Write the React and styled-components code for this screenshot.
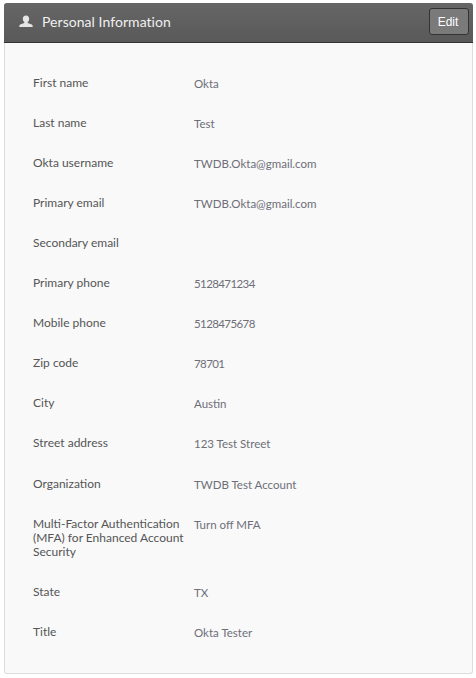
import React from 'react';
import styled, { createGlobalStyle } from 'styled-components';

const GlobalStyle = createGlobalStyle`
  html, body {
    margin: 0;
    padding: 0;
    background: #ffffff;
  }
  body {
    font-family: Lato, "Open Sans", sans-serif;
  }
`;

const Page = styled.div`
  width: 476px;
  height: 678px;
  padding: 3px 0 0 4px;
  box-sizing: border-box;
  overflow: hidden;
`;

const Card = styled.section`
  width: 469px;
  height: 671px;
  box-sizing: border-box;
  border: 1px solid #dcdcdc;
  border-top: 0;
  border-radius: 3px;
  background: #f9f9f9;
  display: flex;
  flex-direction: column;
`;

const Header = styled.header`
  height: 40px;
  margin: 0 -1px;
  box-sizing: border-box;
  padding: 0 4px 3px 15px;
  display: flex;
  align-items: center;
  background: linear-gradient(#666666, #595959);
  border-bottom: 1px solid #333333;
  border-radius: 3px 3px 0 0;
`;

const Heading = styled.h2`
  flex: 1;
  margin: 1px 0 0 9px;
  color: #f0f0f0;
  font-size: 14px;
  font-weight: 400;
  letter-spacing: 0.05px;
`;

const EditButton = styled.button`
  width: 40px;
  height: 27px;
  padding: 2px 2px 0 0;
  border: 1px solid #333333;
  border-radius: 3px;
  background: #7a7a7a;
  color: #ffffff;
  font-family: "Liberation Sans", Arial, sans-serif;
  font-size: 12px;
  font-weight: 400;
`;

const Fields = styled.dl`
  margin: 0;
  padding: 33.05px 28px 0 28px;
  display: flex;
  flex-direction: column;
  gap: 26.05px;
`;

const Row = styled.div`
  display: grid;
  grid-template-columns: 161px 1fr;
  line-height: 14px;
`;

const Label = styled.dt`
  padding-right: 4px;
  color: #555555;
  font-size: 12px;
`;

const Value = styled.dd`
  margin: 1px 0 -1px;
  color: #6e6e78;
  font-size: 11.5px;
  letter-spacing: ${(props) => (props.$digits ? '-0.6px' : '0')};
`;

const UserIcon = () => (
  <svg width="14" height="13" viewBox="0 0 14 14" aria-hidden="true" preserveAspectRatio="none">
    <path
      fill="#e6e6e6"
      d="M7 0.5c2 0 3.2 1.5 3.2 3.6 0 1.5-.6 2.8-1.5 3.5v1.100c1.600.6 4.300 1.200 4.800 2.400.2.5.2 1.200.2 1.900H.3c0-.7 0-1.400.2-1.900.5-1.200 3.200-1.800 4.800-2.400V7.600C4.400 6.900 3.800 5.600 3.800 4.100 3.800 2 5 .5 7 .5z"
    />
  </svg>
);

const fields = [
  ['First name', 'Okta'],
  ['Last name', 'Test'],
  ['Okta username', 'TWDB.Okta@gmail.com'],
  ['Primary email', 'TWDB.Okta@gmail.com'],
  ['Secondary email', ''],
  ['Primary phone', '5128471234'],
  ['Mobile phone', '5128475678'],
  ['Zip code', '78701'],
  ['City', 'Austin'],
  ['Street address', '123 Test Street'],
  ['Organization', 'TWDB Test Account'],
  ['Multi-Factor Authentication (MFA) for Enhanced Account Security', 'Turn off MFA'],
  ['State', 'TX'],
  ['Title', 'Okta Tester'],
];

export default function App() {
  return (
    <Page>
      <GlobalStyle />
      <Card>
        <Header>
          <UserIcon />
          <Heading>Personal Information</Heading>
          <EditButton>Edit</EditButton>
        </Header>
        <Fields>
          {fields.map(([label, value]) => (
            <Row key={label}>
              <Label>{label}</Label>
              <Value $digits={/^\d+$/.test(value)}>{value}</Value>
            </Row>
          ))}
        </Fields>
      </Card>
    </Page>
  );
}
